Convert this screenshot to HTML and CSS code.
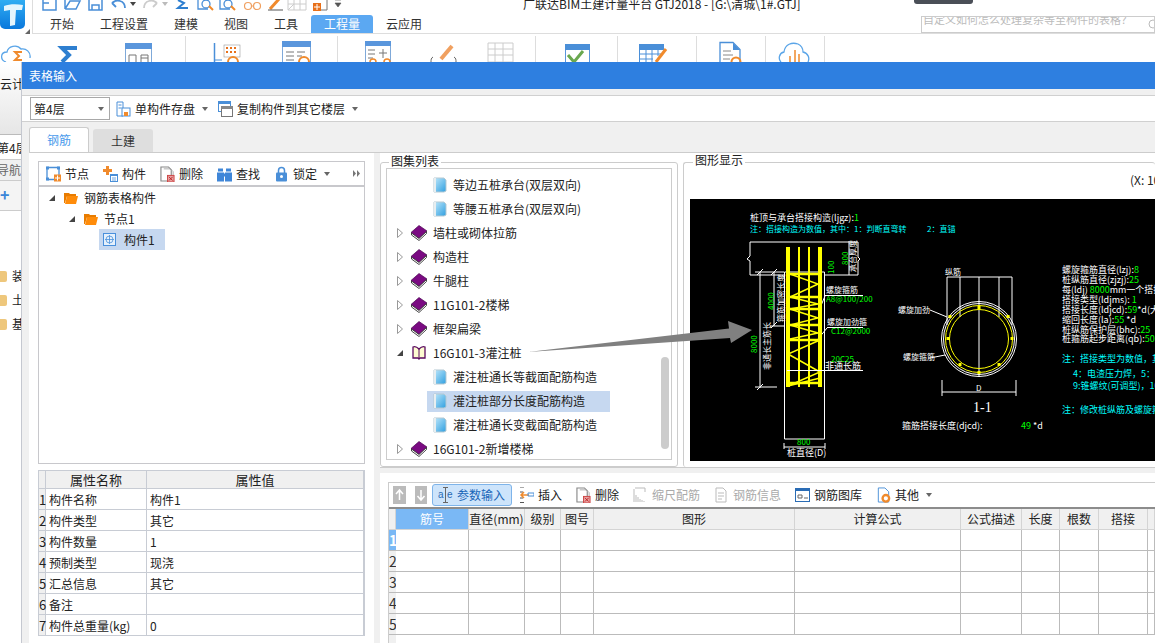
FILE: index.html
```html
<!DOCTYPE html>
<html lang="zh">
<head>
<meta charset="utf-8">
<title>广联达BIM土建计量平台 GTJ2018</title>
<link rel="stylesheet" href="styles.css">
</head>
<body>
<svg class="defs" width="0" height="0" aria-hidden="true">
  <defs>
    <linearGradient id="doc" x1="0" y1="0" x2="1" y2="1"><stop offset="0" stop-color="#bfe8fb"/><stop offset="1" stop-color="#2f9fe0"/></linearGradient>
    <linearGradient id="logo" x1="0" y1="0" x2="0" y2="1"><stop offset="0" stop-color="#35b4f5"/><stop offset="1" stop-color="#0a78dc"/></linearGradient>
    <symbol id="leaf" viewBox="0 0 14 16">
      <path d="M1 1h10l2 2v11l-2 1H1z" fill="url(#doc)" stroke="#b5c9d3"/>
      <path d="M1 1h2v14H1z" fill="#e8eef0"/>
    </symbol>
    <symbol id="book" viewBox="0 0 16 16">
      <path d="M0 7.500 8 .5l8 5.500-8 7.500z" fill="#7a0a82" stroke="#4a0650" stroke-width=".7"/>
      <path d="M.5 8v2l7.500 5.500 7.500-7V6.500l-7.500 7z" fill="#fff" stroke="#333" stroke-width=".9"/>
    </symbol>
    <symbol id="folder" viewBox="0 0 14 12">
      <path d="M0 1h5l1 1h6v2H3L1 11H0z" fill="#e87c00"/>
      <path d="M3 4h11l-2 8H1z" fill="#ff8c0a"/>
    </symbol>
    <symbol id="tri-open" viewBox="0 0 6 6"><path d="M6 0v6H0z" fill="#444"/></symbol>
    <symbol id="tri-closed" viewBox="0 0 6 10"><path d="M.5.5 5.500 5 .5 9.500z" fill="#fff" stroke="#999"/></symbol>
    <symbol id="del" viewBox="0 0 16 17">
      <path d="M1 1h8l3 3v12H1z" fill="#fff" stroke="#888" stroke-width="1.200"/>
      <path d="M4 3h7l3 3v4" fill="none" stroke="#aaa"/>
      <rect x="8" y="10" width="7" height="7" fill="#e8a0a0" stroke="#c44"/>
      <path d="m9.500 11.500 4 4m0-4-4 4" stroke="#b22"/>
    </symbol>
  </defs>
</svg>

<div class="app">
  <header class="app-top">
    <div class="logo-cell">
      <svg class="logo" viewBox="0 0 26 30"><rect y="-4" width="25" height="33" rx="5" fill="url(#logo)"/><path d="M4 6c5-2 13-2 19-1l-1 5-6 0-1 15-5 1 0-16-6 1z" fill="#e4f5fd"/></svg>
      <svg class="logo-grip" viewBox="0 0 5 5"><path d="M5 0v5H0z" fill="#666"/></svg>
    </div>
    <div class="top-right">
      <div class="qat">
        <svg class="qat-icons" viewBox="40 0 310 15">
          <g fill="none" stroke="#4a8fd8" stroke-width="1.500">
            <path d="M43-4v14h13V-4M43 3h6"/>
            <path d="M65 9V-4M65 9h11l4-8H70l-5 8"/>
            <path d="M89-4v14h13V-4M92 10V5h7v5"/>
            <path d="M112 3c4-4 13-3 13 5M112 3l5-3M112 3l4 4" stroke-width="1.800"/>
          </g>
          <path d="M130 2h6l-3 4z" fill="#444"/>
          <path d="M157 3c-4-4-13-3-13 5M157 3l-5-3M157 3l-4 4" fill="none" stroke="#ccc" stroke-width="1.800"/>
          <path d="M162 2h6l-3 4z" fill="#bbb"/>
          <path d="M178 0l6 3-6 5h10" fill="none" stroke="#2e7fd0" stroke-width="2"/>
          <g fill="none" stroke="#4a8fd8" stroke-width="1.300">
            <path d="M198-3v12h10M220-3v12h10"/>
            <circle cx="206" cy="4" r="4"/>
            <circle cx="228" cy="4" r="4"/>
          </g>
          <path d="m209 6 4 4M231 6l4 4" stroke="#f08a2c" stroke-width="2"/>
          <g fill="none" stroke="#f0a060" stroke-width="1.200">
            <circle cx="248" cy="6" r="3.500"/><circle cx="257" cy="6" r="3.500"/><path d="M251.500 6h2M246-3h13"/>
          </g>
          <path d="m270 9 9-10" stroke="#f08a2c" stroke-width="3"/>
          <path d="M268 10h15" stroke="#555"/>
          <path d="M288-2h18v12h-18zM294-2v12M300-2v12M288 4h18M288 10l6-6" fill="none" stroke="#ccc"/>
          <path d="M322-3h5v13h-10V4" fill="none" stroke="#777"/>
          <rect x="313" y="3" width="8" height="8" fill="#e8701a"/>
          <path d="M317 4v6M314 7h6" stroke="#fff"/>
          <path d="M335 3h6l-3 4zM335 0h6" fill="#555" stroke="#555" stroke-width=".6"/>
        </svg>
        <div class="app-title">广联达BIM土建计量平台 GTJ2018 - [G:\清城\1#.GTJ]</div>
        <div class="chip"></div>
      </div>
      <div class="tabs-row">
        <nav class="rtabs">
          <span class="rtab">开始</span>
          <span class="rtab">工程设置</span>
          <span class="rtab">建模</span>
          <span class="rtab">视图</span>
          <span class="rtab">工具</span>
          <span class="rtab rtab-on">工程量</span>
          <span class="rtab">云应用</span>
        </nav>
        <div class="search">
          <div class="search-a">自定义如何怎么处理复杂等至构件的表格？</div>
          <div class="search-b">广联达BIM钢筋算量软件视频教程</div>
          <svg class="search-ico" viewBox="0 0 10 12"><circle cx="5" cy="5" r="4" fill="none" stroke="#bbb"/><path d="m8 8 2 3" stroke="#bbb"/></svg>
        </div>
      </div>
    </div>
  </header>

  <div class="ribbon">
    <div class="rg rg1">
      <svg viewBox="0 34 186 28">
        <path d="M6 62c-6-2-6-10 1-10 1-6 10-8 14-3 5-1 10 3 9 9" fill="none" stroke="#5aa5e8" stroke-width="1.300"/>
        <path d="M22 52h-7l4 4-4 4h7" fill="none" stroke="#f08a2c" stroke-width="2"/>
        <path d="M77 48h-15l7 7-7 7" fill="none" stroke="#2e7fd0" stroke-width="4"/>
        <rect x="125.500" y="43.500" width="26" height="24" fill="#fff" stroke="#7fa9d9"/>
        <rect x="125" y="43" width="27" height="6" fill="#5a96dc"/>
        <path d="M129 62v-7h7v7M141 62v-7h7v7M141 58h7" fill="none" stroke="#777"/>
      </svg>
    </div>
    <div class="rg rg2">
      <svg viewBox="186 34 152 28">
        <path d="M214.500 43v19" stroke="#4a8fd8" stroke-width="1.500"/>
        <rect x="224" y="45" width="16" height="12" fill="#fff" stroke="#999" stroke-width=".6"/>
        <path d="M226 47h2v2h-2zM230 47h2v2h-2zM234 47h2v2h-2zM226 51h2v2h-2zM230 51h2v2h-2zM234 51h2v2h-2z" fill="#e8701a"/>
        <path d="M214 60h8" stroke="#4a8fd8"/>
        <circle cx="233" cy="62" r="5" fill="none" stroke="#f08a2c" stroke-width="2"/>
        <rect x="282.500" y="41.500" width="28" height="24" fill="#fff" stroke="#7fa9d9"/>
        <rect x="282" y="41" width="29" height="6" fill="#5a96dc"/>
        <path d="M286 52h8M286 56h8M286 60h8M297 52h8M297 56h5" stroke="#777"/>
        <circle cx="304" cy="62" r="5" fill="none" stroke="#f08a2c" stroke-width="2"/>
      </svg>
    </div>
    <div class="rg rg3">
      <svg viewBox="338 34 198 28">
        <rect x="365.500" y="41.500" width="25" height="24" fill="#fff" stroke="#7fa9d9"/>
        <rect x="365" y="41" width="26" height="5" fill="#5a96dc"/>
        <path d="M368 50h7M368 54h7M368 58h5" stroke="#777"/>
        <path d="M383 49v9M379 53h8" stroke="#777"/>
        <path d="M370 62a3 3 0 0 1 6 0M384 62a3 3 0 0 1 6 0" fill="none" stroke="#f08a2c" stroke-width="1.500"/>
        <path d="m441 59 11-13" stroke="#f0a060" stroke-width="4"/>
        <path d="M431 62c0-2 0-4 2-5M454 57c2 1 2 3 2 5" fill="none" stroke="#666"/>
        <path d="M488 43h25v19h-25zM495 43v19M503 43v19M488 49h25M488 55h25" fill="none" stroke="#ccc"/>
      </svg>
    </div>
    <div class="rg rg4">
      <svg viewBox="536 34 82 28">
        <rect x="565.500" y="44.500" width="24" height="20" fill="#fff" stroke="#5a96dc"/>
        <rect x="565" y="44" width="25" height="6" fill="#4a8fd8"/>
        <path d="m568 55 6 7 9-11" fill="none" stroke="#6aa84f" stroke-width="3"/>
      </svg>
    </div>
    <div class="rg rg5">
      <svg viewBox="618 34 79 28">
        <rect x="639" y="44" width="25" height="6" fill="#4a8fd8"/>
        <path d="M639.500 50v12M646 50v12M652 50v12M658 50v6M639 54h22M639 59h14" stroke="#4a8fd8" fill="none"/>
        <path d="m656 62 10-13" stroke="#f08a2c" stroke-width="3"/>
      </svg>
    </div>
    <div class="rg rg6">
      <svg viewBox="697 34 69 28">
        <path d="M720 62V42.500h13l7 7V62" fill="#fff" stroke="#4a8fd8" stroke-width="1.300"/>
        <path d="M733 43v7h7z" fill="#4a8fd8"/>
        <path d="M723 51h8M723 55h10M723 59h7" stroke="#888"/>
        <circle cx="736" cy="62" r="4.500" fill="none" stroke="#f08a2c" stroke-width="2"/>
      </svg>
    </div>
    <div class="rg rg7">
      <svg viewBox="766 34 59 28">
        <path d="M781 62c-3-3-2-9 3-10 1-8 8-10 14-8 4 2 5 5 5 8 5 1 7 6 5 10" fill="none" stroke="#5aa5e8" stroke-width="1.300"/>
        <path d="M790 62v-6M795 62v-12M799 62v-8" stroke="#f08a2c" stroke-width="1.500"/>
      </svg>
    </div>
  </div>

  <aside class="side">
    <div class="side-cloud"><span class="side-cloud-t">云计</span></div>
    <div class="side-floor">第4层</div>
    <div class="side-nav">导航</div>
    <div class="side-plus">+</div>
    <ul class="side-list">
      <li class="side-item"><span class="side-fold"></span>装</li>
      <li class="side-item"><span class="side-fold"></span>土</li>
      <li class="side-item"><span class="side-fold"></span>基</li>
    </ul>
  </aside>
</div>

<section class="dialog">
  <div class="dlg-head">表格输入</div>
  <div class="dlg-tool-wrap">
    <div class="dlg-tool">
      <div class="floor-sel"><span>第4层</span><i class="caret"></i></div>
      <div class="tool has-caret">
        <svg class="ico" viewBox="0 0 15 16"><path d="M1 1h6v14H1z" fill="#fff" stroke="#4a8fd8"/><path d="M2.500 4h3M2.500 7h3" stroke="#4a8fd8"/><rect x="6" y="7" width="8" height="8" fill="#fff" stroke="#4a8fd8"/><rect x="8" y="11" width="4" height="4" fill="#f08a2c"/></svg>
        <span>单构件存盘</span><i class="caret"></i>
      </div>
      <div class="tool has-caret">
        <svg class="ico" viewBox="0 0 15 16"><rect x=".5" y=".5" width="12" height="10" fill="#fff" stroke="#4a8fd8"/><rect width="13" height="3" fill="#4a8fd8"/><rect x="3.500" y="5.500" width="11" height="10" fill="#fff" stroke="#777"/><rect x="3" y="5" width="12" height="3" fill="#888"/></svg>
        <span>复制构件到其它楼层</span><i class="caret"></i>
      </div>
    </div>
  </div>
  <div class="dlg-tabs">
    <div class="dtab dtab-on">钢筋</div>
    <div class="dtab">土建</div>
  </div>

  <div class="pane">
    <div class="col-left">
      <div class="tree-panel">
        <div class="tree-tool">
          <div class="tool">
            <svg class="ico" viewBox="0 0 15 15"><path d="M1 1h12v12H1z" fill="none" stroke="#4a8fd8" stroke-width="1.300"/><rect width="3" height="3" fill="#4a8fd8"/><rect x="11" width="3" height="3" fill="#4a8fd8"/><rect y="11" width="3" height="3" fill="#4a8fd8"/><rect x="8" y="8" width="7" height="7" fill="#f08a2c"/><path d="M11.500 9v5M9 11.500h5" stroke="#fff"/></svg>
            <span>节点</span>
          </div>
          <div class="tool">
            <svg class="ico" viewBox="0 0 15 16"><path d="M3 0h3v3h3v3H6v3H3V6H0V3h3z" fill="#f08a2c"/><rect x="7.500" y="8.500" width="7" height="7" fill="#fff" stroke="#4a8fd8"/><rect x="7" y="8" width="8" height="2" fill="#4a8fd8"/><path d="M9 12h4M9 14h4" stroke="#4a8fd8" stroke-width=".8"/></svg>
            <span>构件</span>
          </div>
          <div class="tool">
            <svg class="ico"><use href="#del"/></svg>
            <span>删除</span>
          </div>
          <div class="tool">
            <svg class="ico" viewBox="0 0 15 15"><path d="M1 2h5v3H1zM9 2h5v3H9zM0 6h7v9H0zM8 6h7v9H8zM6 7h3v3H6z" fill="#3f86d8"/></svg>
            <span>查找</span>
          </div>
          <div class="tool has-caret">
            <svg class="ico" viewBox="0 0 15 15"><path d="M4.500 7V4a3 3 0 0 1 6 0v3" fill="none" stroke="#4a8fd8" stroke-width="1.500"/><rect x="2" y="6" width="11" height="9" rx="1" fill="#4a8fd8"/><circle cx="7.500" cy="10" r="1.500" fill="#fff"/></svg>
            <span>锁定</span><i class="caret"></i>
          </div>
          <svg class="more" viewBox="0 0 7 7"><path d="M0 0l3 3.500L0 7zM4 0l3 3.500L4 7z" fill="#777"/></svg>
        </div>
        <div class="tree">
          <div class="tnode tn0"><svg class="tri"><use href="#tri-open"/></svg><svg class="fld"><use href="#folder"/></svg><span>钢筋表格构件</span></div>
          <div class="tnode tn1"><svg class="tri"><use href="#tri-open"/></svg><svg class="fld"><use href="#folder"/></svg><span>节点1</span></div>
          <div class="tnode tn2"><div class="tsel"><svg class="comp" viewBox="0 0 13 13"><rect x=".5" y=".5" width="12" height="12" fill="#e6f1fc" stroke="#4a90dc"/><circle cx="6.500" cy="6.500" r="3.500" fill="none" stroke="#4a90dc" stroke-width=".8"/><path d="M6.500 2v9M2 6.500h9" stroke="#4a90dc" stroke-width=".8"/></svg><span>构件1</span></div></div>
        </div>
      </div>
      <div class="props">
        <div class="pc ph"></div><div class="pc ph phc ph-lg">属性名称</div><div class="pc ph phc ph-lg">属性值</div>
        <div class="pc pn">1</div><div class="pc">构件名称</div><div class="pc">构件1</div>
        <div class="pc pn">2</div><div class="pc">构件类型</div><div class="pc">其它</div>
        <div class="pc pn">3</div><div class="pc">构件数量</div><div class="pc">1</div>
        <div class="pc pn">4</div><div class="pc">预制类型</div><div class="pc">现浇</div>
        <div class="pc pn">5</div><div class="pc">汇总信息</div><div class="pc">其它</div>
        <div class="pc pn">6</div><div class="pc">备注</div><div class="pc"></div>
        <div class="pc pn">7</div><div class="pc">构件总重量(kg)</div><div class="pc">0</div>
      </div>
    </div>

    <div class="col-right">
      <div class="top-split">
        <div class="group g-list">
          <div class="legend">图集列表</div>
          <div class="list">
            <div class="li li-leaf"><div class="li-in"><svg class="doc"><use href="#leaf"/></svg><span>等边五桩承台(双层双向)</span></div></div>
            <div class="li li-leaf"><div class="li-in"><svg class="doc"><use href="#leaf"/></svg><span>等腰五桩承台(双层双向)</span></div></div>
            <div class="li li-book"><svg class="arr"><use href="#tri-closed"/></svg><svg class="bk"><use href="#book"/></svg><span>墙柱或砌体拉筋</span></div>
            <div class="li li-book"><svg class="arr"><use href="#tri-closed"/></svg><svg class="bk"><use href="#book"/></svg><span>构造柱</span></div>
            <div class="li li-book"><svg class="arr"><use href="#tri-closed"/></svg><svg class="bk"><use href="#book"/></svg><span>牛腿柱</span></div>
            <div class="li li-book"><svg class="arr"><use href="#tri-closed"/></svg><svg class="bk"><use href="#book"/></svg><span>11G101-2楼梯</span></div>
            <div class="li li-book"><svg class="arr"><use href="#tri-closed"/></svg><svg class="bk"><use href="#book"/></svg><span>框架扁梁</span></div>
            <div class="li li-book"><svg class="arr arr-open"><use href="#tri-open"/></svg><svg class="bk" viewBox="0 0 16 16"><path d="M2 2c2-1 4 0 6 2 2-2 4-3 6-2v11H9l-1 1-1-1H2z" fill="#fdfbd0" stroke="#5a0a60" stroke-width="1.300"/><path d="M8 4v9" stroke="#5a0a60"/></svg><span>16G101-3灌注桩</span></div>
            <div class="li li-leaf"><div class="li-in"><svg class="doc"><use href="#leaf"/></svg><span>灌注桩通长等截面配筋构造</span></div></div>
            <div class="li li-leaf"><div class="li-in li-sel"><svg class="doc"><use href="#leaf"/></svg><span>灌注桩部分长度配筋构造</span></div></div>
            <div class="li li-leaf"><div class="li-in"><svg class="doc"><use href="#leaf"/></svg><span>灌注桩通长变截面配筋构造</span></div></div>
            <div class="li li-book"><svg class="arr"><use href="#tri-closed"/></svg><svg class="bk"><use href="#book"/></svg><span>16G101-2新增楼梯</span></div>
            <div class="scroll"></div>
          </div>
        </div>
        <div class="group g-draw">
          <div class="legend">图形显示</div>
          <div class="coord">(X: 1000, Y: 1000)</div>
          <svg class="cad" viewBox="690 199 465 262">
            <text class="ct cw" x="750" y="221">桩顶与承台搭接构造(ljgz):<tspan class="cg">1</tspan></text>
            <text class="c8 cc" x="750" y="232">注：搭接构造为数值，其中：1：判断直弯转</text>
            <text class="c8 cc" x="927" y="232">2：直锚</text>
            <g class="cl">
              <path d="M750 242H858M750 242v14l-3 3 3 2v14h34M825 275h33v-14l2-2-2-2v-15M849 241v34"/>
              <path d="M784.500 272v167h40V272h-40"/>
              <path d="M760 272v116M755 272h29M755 387h22M757 275l6-6M757 390l6-6"/>
              <path d="M774 272v54M770 326h14M771 275l6-6M771 328l6-6"/>
              <path d="M784 447h41M784 443v6M825 443v6"/>
              <path d="M825 295.500h38M825 296l-5 12M827 327.500h36M827 328l-9 11"/>
            </g>
            <g class="cy">
              <path class="cy4" d="M788 247v140M820 247v140"/>
              <path class="cy2" d="M799 247v140M809 247v140"/>
              <path class="cy3" d="M786 274h36M786 297h36M786 309h36M786 325h36M786 340h36M786 383h36"/>
              <path class="cy1" d="M790 274l28 10-28 13 28 7-28 5 28 9-28 7 28 8-28 6M820 340l-32 14 32 18-32 14 32-8"/>
            </g>
            <path class="cl" d="M787 370.500h76"/>
            <text class="c8 cw" x="826" y="293">螺旋箍筋</text>
            <text class="c8 cg" x="826" y="302">A8@100/200</text>
            <text class="c8 cw" x="827" y="325">螺旋加劲箍</text>
            <text class="c8 cg" x="831" y="334">C12@2000</text>
            <text class="c8 cg" x="831" y="362">20C25</text>
            <text class="ct cw" x="825" y="369">非通长筋</text>
            <text class="c8 cg vt1" x="0" y="0">800</text>
            <text class="c8 cw vt2" x="0" y="0">承台厚度</text>
            <text class="c8 cg vt3" x="0" y="0">100</text>
            <text class="c8 cg vt4" x="0" y="0">4000</text>
            <text class="c8 cw vt5" x="0" y="0">箍筋加密长度</text>
            <text class="c8 cg vt6" x="0" y="0">8000</text>
            <text class="c8 cw vt7" x="0" y="0">非通长主筋长</text>
            <text class="c8 cg" x="797" y="445">800</text>
            <text class="ct cw" x="787" y="456">桩直径(D)</text>

            <g class="cl">
              <path d="M947 277h65M947 277v48M960 277v40M979 277v100M999 277v40M1012 277v48"/>
              <circle cx="979" cy="339" r="37.500"/>
              <circle cx="979" cy="339" r="35.500"/>
              <path d="M930 310l17 7M930 358l15-3"/>
              <path d="M942 392h74M942 380v16M1016 380v16"/>
            </g>
            <g class="cycl">
              <circle cx="979" cy="339" r="33.500"/>
              <circle cx="979" cy="339" r="29.500"/>
            </g>
            <path d="M977.500 306h3v3h-3zM948.500 315h3v3h-3zM1006.500 315h3v3h-3zM1010.500 337h3v3h-3zM946.500 337h3v3h-3zM958.500 363h3v3h-3zM997.500 363h3v3h-3zM977.500 371h3v3h-3z" fill="#ff0"/>
            <text class="c8 cw" x="945" y="275">纵筋</text>
            <text class="c8 cw" x="898" y="313">螺旋加劲</text>
            <text class="c8 cw" x="903" y="360">螺旋箍筋</text>
            <text class="c8 cw" x="976" y="391">D</text>
            <text class="one-one" x="973" y="412">1-1</text>
            <text class="ct cw" x="902" y="429">箍筋搭接长度(djcd):</text>
            <text class="ct cg" x="1021" y="429">49 <tspan class="cw">*d</tspan></text>
            <text class="ct cw" x="1062" y="273">螺旋箍筋直径(lzj):<tspan class="cg">8</tspan></text>
            <text class="ct cw" x="1062" y="283">桩纵筋直径(zjzj):<tspan class="cg">25</tspan></text>
            <text class="ct cw" x="1062" y="293">每(ldj) <tspan class="cg">8000</tspan>mm一个搭接</text>
            <text class="ct cw" x="1062" y="303">搭接类型(ldjms): <tspan class="cg">1</tspan></text>
            <text class="ct cw" x="1062" y="313">搭接长度(ldjcd):<tspan class="cg">59</tspan>*d(大于</text>
            <text class="ct cw" x="1062" y="323">缩回长度(la):<tspan class="cg">55</tspan> *d</text>
            <text class="ct cw" x="1062" y="333">桩纵筋保护层(bhc):<tspan class="cg">25</tspan></text>
            <text class="ct cw" x="1062" y="342">桩箍筋起步距离(qb):<tspan class="cg">50</tspan></text>
            <text class="ct cc" x="1062" y="362">注：搭接类型为数值，其中</text>
            <text class="ct cc" x="1073" y="377">4：电渣压力焊，5：锥</text>
            <text class="ct cc" x="1073" y="389">9:锥螺纹(可调型)，10:</text>
            <text class="ct cc" x="1062" y="413">注：修改桩纵筋及螺旋箍筋</text>
          </svg>
        </div>
      </div>
      <div class="h-split"></div>
      <div class="rebar">
        <div class="rebar-tool">
          <div class="mini-btn"><svg viewBox="0 0 14 18"><rect width="13" height="18" fill="#bbb"/><path d="M6.500 4v10M3 8l3.500-4L10 8" fill="none" stroke="#fff" stroke-width="1.500"/></svg></div>
          <div class="mini-btn mini-2"><svg viewBox="0 0 12 18"><rect width="12" height="18" fill="#bbb"/><path d="M6 4v10M2.500 10 6 14l3.500-4" fill="none" stroke="#fff" stroke-width="1.500"/></svg></div>
          <div class="tool-on">
            <svg class="ico" viewBox="0 0 15 16"><path d="M7.500 0v16M5 .5h5M5 15.500h5" stroke="#666" fill="none"/><text class="aje" x="0" y="11">a</text><text class="aje" x="9" y="11">e</text></svg>
            <span>参数输入</span>
          </div>
          <div class="tool">
            <svg class="ico" viewBox="0 0 15 16"><path d="M1 0h4M1 5h3M1 11h3M1 15.500h4" stroke="#555" fill="none"/><path d="M10 8H2m3-3L2 8l3 3" fill="none" stroke="#f08a2c" stroke-width="1.500"/><path d="M9 6h6v3H9z" fill="none" stroke="#4a8fd8"/></svg>
            <span>插入</span>
          </div>
          <div class="tool">
            <svg class="ico"><use href="#del"/></svg>
            <span>删除</span>
          </div>
          <div class="tool tool-off">
            <svg class="ico" viewBox="0 0 15 16"><path d="M1 2v13M3 15V8M5 15V10M7 15v-3M9 15v-2M11 15v-1M2 1h10M12 1v4" stroke="#bbb" fill="none"/></svg>
            <span>缩尺配筋</span>
          </div>
          <div class="tool tool-off">
            <svg class="ico" viewBox="0 0 15 16"><path d="M2 1h7l3 3v11H2z" fill="#fff" stroke="#bbb"/><path d="M4 6h6M4 9h6M4 12h4" stroke="#bbb"/></svg>
            <span>钢筋信息</span>
          </div>
          <div class="tool">
            <svg class="ico" viewBox="0 0 15 16"><rect x=".5" y="1.500" width="14" height="13" fill="#fff" stroke="#2a6cb5"/><rect y="1" width="15" height="3" fill="#2a6cb5"/><path d="M3 8h4v3H3zM9 11h4" fill="none" stroke="#666"/></svg>
            <span>钢筋图库</span>
          </div>
          <div class="tool has-caret">
            <svg class="ico" viewBox="0 0 15 17"><path d="M2 1h7l4 4v11H2z" fill="#fff" stroke="#4a8fd8"/><circle cx="10" cy="12" r="3.500" fill="none" stroke="#f08a2c" stroke-width="2.500"/></svg>
            <span>其他</span><i class="caret"></i>
          </div>
        </div>
        <div class="bars">
          <div class="hc"></div><div class="hc hc-on">筋号</div><div class="hc">直径(mm)</div><div class="hc">级别</div><div class="hc">图号</div><div class="hc">图形</div><div class="hc">计算公式</div><div class="hc">公式描述</div><div class="hc">长度</div><div class="hc">根数</div><div class="hc">搭接</div><div class="hc"></div>
          <div class="rn rn-on">1</div><div class="bc"></div><div class="bc"></div><div class="bc"></div><div class="bc"></div><div class="bc"></div><div class="bc"></div><div class="bc"></div><div class="bc"></div><div class="bc"></div><div class="bc"></div><div class="bc"></div>
          <div class="rn">2</div><div class="bc"></div><div class="bc"></div><div class="bc"></div><div class="bc"></div><div class="bc"></div><div class="bc"></div><div class="bc"></div><div class="bc"></div><div class="bc"></div><div class="bc"></div><div class="bc"></div>
          <div class="rn">3</div><div class="bc"></div><div class="bc"></div><div class="bc"></div><div class="bc"></div><div class="bc"></div><div class="bc"></div><div class="bc"></div><div class="bc"></div><div class="bc"></div><div class="bc"></div><div class="bc"></div>
          <div class="rn">4</div><div class="bc"></div><div class="bc"></div><div class="bc"></div><div class="bc"></div><div class="bc"></div><div class="bc"></div><div class="bc"></div><div class="bc"></div><div class="bc"></div><div class="bc"></div><div class="bc"></div>
          <div class="rn">5</div><div class="bc"></div><div class="bc"></div><div class="bc"></div><div class="bc"></div><div class="bc"></div><div class="bc"></div><div class="bc"></div><div class="bc"></div><div class="bc"></div><div class="bc"></div><div class="bc"></div>
          <div class="rn rn-tail"></div>
        </div>
      </div>
    </div>
  </div>
</section>

<svg class="pointer" viewBox="0 0 1155 643" aria-hidden="true">
  <path d="M528 352 729 328.500 728 321 752 330 731 343 730 338z" fill="#808080"/>
</svg>
</body>
</html>
```

FILE: styles.css
```css
* { box-sizing: border-box; }
html, body { margin: 0; padding: 0; }
body {
  position: relative;
  width: 1155px;
  height: 643px;
  overflow: hidden;
  background: #fff;
  color: #222;
  font: 12px/16px "Noto Sans CJK SC", "Microsoft YaHei", sans-serif;
}
svg { display: block; flex: none; }
.defs { position: absolute; }

/* Application behind the dialog */
.app { position: absolute; left: 0; top: 0; width: 1155px; height: 643px; overflow: hidden; }
.app-top { display: flex; height: 34px; }
.logo-cell { width: 33px; height: 34px; position: relative; border-right: 1px solid #ddd; }
.logo { width: 26px; height: 30px; }
.logo-grip { position: absolute; left: 25px; top: 29px; width: 5px; height: 5px; }
.top-right { flex: 1; min-width: 0; }
.qat { display: flex; height: 15px; overflow: hidden; align-items: flex-start; padding-left: 7px; }
.qat-icons { width: 310px; height: 15px; }
.app-title { margin: -4px 0 0 173px; white-space: nowrap; width: 292px; }
.chip { width: 59px; height: 4px; margin-left: 99px; background: #4a4f57; border-radius: 0 0 3px 3px; }
.tabs-row { display: flex; height: 19px; border-bottom: 1px solid #ddd; padding-left: 4px; }
.rtabs { display: flex; height: 18px; }
.rtab { padding: 0 13px; line-height: 18px; color: #333; }
.rtab-on { background: #5ba8f2; color: #fff; border-radius: 3px 3px 0 0; }
.search {
  position: relative;
  margin: 1px 0 0 auto;
  width: 234px;
  height: 17px;
  overflow: hidden;
  border: 1px solid #ccc;
  padding-left: 1px;
  color: #bbb;
  font-size: 11px;
  line-height: 14px;
  white-space: nowrap;
}
.search-a { margin-top: -5px; }
.search-b { margin-top: 4px; }
.search-ico { position: absolute; right: -4px; top: 2px; width: 10px; height: 12px; }

.ribbon { display: flex; height: 28px; overflow: hidden; }
.rg { height: 28px; border-right: 1px solid #ddd; margin-top: 2px; }
.rg svg { height: 28px; margin-top: -2px; }
.rg1, .rg1 svg { width: 186px; }
.rg2, .rg2 svg { width: 152px; }
.rg3, .rg3 svg { width: 198px; }
.rg4, .rg4 svg { width: 82px; }
.rg5, .rg5 svg { width: 79px; }
.rg6, .rg6 svg { width: 69px; }
.rg7, .rg7 svg { width: 59px; }

.side { width: 21px; overflow: hidden; white-space: nowrap; }
.side-cloud { height: 73px; background: linear-gradient(#fff, #e6e6e6); padding-top: 14px; border-bottom: 1px solid #bbb; }
.side-cloud-t { display: block; }
.side-floor { height: 25px; line-height: 25px; margin-left: -3px; border-bottom: 1px solid #ccc; }
.side-nav { height: 21px; line-height: 20px; margin-left: -3px; background: #f0f0f0; color: #666; border-bottom: 1px solid #ccc; }
.side-plus { height: 30px; line-height: 26px; color: #3a86d8; font-size: 16px; font-weight: 700; border-bottom: 1px solid #ccc; background: #f4f4f4; }
.side-list { list-style: none; margin: 0; padding: 53px 0 0; }
.side-item { display: flex; height: 24px; align-items: center; gap: 5px; }
.side-fold { width: 7px; height: 11px; background: #eec77c; border-radius: 0 2px 2px 0; flex: none; }

/* Dialog window */
.dialog {
  position: absolute;
  left: 21px;
  top: 62px;
  width: 1134px;
  height: 581px;
  display: flex;
  flex-direction: column;
  background: #f0f0f0;
  border-left: 1px solid #c5c8d0;
  overflow: hidden;
}
.dlg-head { height: 27px; line-height: 27px; flex: none; padding-left: 7px; background: #2e7fe0; color: #fff; }
.dlg-tool-wrap { height: 33px; flex: none; padding-top: 6px; }
.dlg-tool { display: flex; align-items: center; height: 27px; background: #fff; border-top: 1px solid #d0d0d0; border-bottom: 1px solid #d0d0d0; padding-left: 8px; }
.floor-sel { display: flex; align-items: center; justify-content: space-between; width: 80px; height: 23px; border: 1px solid #a8a8a8; padding: 0 5px 0 3px; margin-right: -1px; }
.caret { width: 0; height: 0; border: 3px solid transparent; border-top: 4px solid #666; border-bottom: 0; flex: none; }

.tool { display: flex; align-items: center; gap: 4px; padding: 0 7px; height: 22px; white-space: nowrap; }
.tool.has-caret { padding-right: 3px; }
.tool .caret { margin-left: 3px; }
.ico { width: 15px; height: 16px; }
.tool-off { color: #aaa; }
.tool-on { display: flex; align-items: center; gap: 4px; width: 80px; height: 22px; padding-left: 5px; color: #1a66b8; background: #cde4fb; border: 1px solid #7eb4ea; border-radius: 3px; white-space: nowrap; }
.aje { font: 10px "Liberation Sans", sans-serif; fill: #2a6cb5; }

.dlg-tabs { display: flex; gap: 4px; height: 30px; flex: none; padding: 5px 0 0 7px; }
.dtab { width: 60px; height: 23px; line-height: 24px; text-align: center; background: #dedede; color: #333; margin-top: 2px; border-radius: 3px 3px 0 0; }
.dtab-on { background: #fff; color: #4a9bec; height: 25px; margin-top: 0; border: 1px solid #ccc; border-bottom: 0; }

.pane { flex: 1; min-height: 0; display: flex; margin-left: 7px; background: #fff; border-top: 1px solid #ccc; }

.col-left { width: 345px; flex: none; padding: 8px 0 0 9px; overflow: hidden; }
.tree-panel { width: 327px; height: 303px; border: 1px solid #c8c8cc; }
.tree-tool { display: flex; align-items: center; height: 25px; border-bottom: 2px solid #c8c8cc; }
.more { width: 7px; height: 7px; margin-left: auto; margin-right: 4px; }
.tnode { display: flex; align-items: center; height: 21px; gap: 9px; }
.tn0 { padding-left: 10px; }
.tn1 { padding-left: 30px; }
.tn2 { padding-left: 60px; }
.tri { width: 6px; height: 6px; }
.fld { width: 14px; height: 12px; margin-right: -3px; }
.tsel { display: flex; align-items: center; gap: 8px; width: 66px; height: 21px; padding-left: 4px; background: #c6d8f0; }
.comp { width: 13px; height: 13px; }

.props {
  display: grid;
  grid-template-columns: 7px 101px 217px;
  grid-template-rows: 18px;
  grid-auto-rows: 21px;
  margin-top: 6px;
  width: 327px;
  border-top: 1px solid #c8ccd4;
  border-left: 1px solid #c8ccd4;
  border-right: 2px solid #c8ccd4;
}
.pc { border-right: 1px solid #c8ccd4; border-bottom: 1px solid #c8ccd4; padding-left: 3px; line-height: 22px; white-space: nowrap; overflow: hidden; }
.ph { background: #f0f0f0; line-height: 17px; }
.phc { text-align: center; padding-left: 0; }
.ph-lg { font-size: 13px; }
.pn { background: #f0f0f0; padding: 0; text-align: center; font-size: 13px; overflow: visible; }

.col-right { flex: 1; min-width: 0; border-left: 6px solid #f0f0f0; display: flex; flex-direction: column; overflow: hidden; }
.top-split { display: flex; gap: 5px; height: 314px; flex: none; padding-top: 9px; overflow: hidden; }
.group { position: relative; height: 305px; border: 1px solid #ccc; border-radius: 3px; }
.legend { position: absolute; left: 8px; top: -10px; padding: 0 2px; background: #fff; line-height: 16px; }
.g-list { width: 298px; flex: none; padding: 5px; }
.g-draw { flex: 1; min-width: 0; border-right: 0; border-bottom: 0; }
.g-draw .legend { left: 9px; top: -11px; }
.list { position: relative; height: 292px; padding-top: 4px; border: 1px solid #ccc; overflow: hidden; }
.li { display: flex; align-items: center; height: 24px; white-space: nowrap; }
.li-leaf { padding-left: 40px; }
.li-book { padding-left: 10px; }
.li-in { display: flex; align-items: center; gap: 6px; height: 21px; padding-left: 6px; }
.li-sel { width: 183px; background: #c6d8f0; }
.doc { width: 14px; height: 16px; }
.arr { width: 6px; height: 10px; margin-right: 8px; }
.arr-open { height: 6px; }
.bk { width: 16px; height: 16px; margin-right: 6px; }
.scroll { position: absolute; left: 274px; top: 188px; width: 8px; height: 92px; background: #ccc; border-radius: 4px; }

.coord { height: 36px; padding: 9px 0 0 446px; white-space: nowrap; overflow: hidden; }
.cad { width: 465px; height: 262px; margin-left: 6px; background: #000; }
.ct { font: 9px "Noto Sans CJK SC", sans-serif; }
.c8 { font: 8px "Noto Sans CJK SC", sans-serif; }
.cw { fill: #fff; }
.cg { fill: #0f0; }
.cc { fill: #0ff; }
.cl { fill: none; stroke: #fff; stroke-width: 1; }
.cy, .cycl { fill: none; stroke: #ff0; }
.cy4 { stroke-width: 4; }
.cy3 { stroke-width: 2.500; }
.cy2 { stroke-width: 2; }
.cy1 { stroke-width: 1.500; }
.cycl { stroke-width: 1; }
.one-one { font: 14px "Liberation Serif", serif; fill: #fff; }
.vt1 { transform: translate(848px, 265px) rotate(-90deg); }
.vt2 { transform: translate(856px, 272px) rotate(-90deg); }
.vt3 { transform: translate(834px, 274px) rotate(-90deg); }
.vt4 { transform: translate(774px, 310px) rotate(-90deg); }
.vt5 { transform: translate(784px, 322px) rotate(-90deg); }
.vt6 { transform: translate(757px, 353px) rotate(-90deg); }
.vt7 { transform: translate(770px, 370px) rotate(-90deg); }

.h-split { height: 6px; flex: none; background: #f0f0f0; border-top: 1px solid #ccc; }
.rebar { flex: 1; min-height: 0; margin: 9px 0 0 8px; border-top: 1px solid #ccc; border-left: 1px solid #ccc; }
.rebar-tool { display: flex; align-items: center; height: 24px; padding-left: 4px; }
.mini-btn { width: 14px; height: 18px; }
.mini-btn svg { width: 14px; height: 18px; }
.mini-2 { margin: 0 5px 0 8px; width: 12px; }
.mini-2 svg { width: 12px; }

.bars {
  display: grid;
  grid-template-columns: 7px 73px 56px 36px 33px 201px 166px 61px 38px 39px 49px 1fr;
  grid-auto-rows: 21px;
  border-top: 2px solid #8c8c8c;
}
.hc { background: #f0f0f0; border-right: 1px solid #d4d4d4; border-bottom: 1px solid #d4d4d4; text-align: center; line-height: 19px; white-space: nowrap; overflow: hidden; }
.hc-on { background: #7ab8f5; color: #fff; }
.bc { border-right: 1px solid #bbb; border-bottom: 1px solid #bbb; }
.rn { background: #f0f0f0; border-bottom: 1px solid #bbb; font-size: 14px; line-height: 20px; overflow: hidden; color: #333; }
.rn-on { background: #7ab8f5; color: #fff; font-weight: 700; }
.rn-tail { border-bottom: 0; height: 21px; }

.pointer { position: absolute; left: 0; top: 0; width: 1155px; height: 643px; pointer-events: none; }
```
